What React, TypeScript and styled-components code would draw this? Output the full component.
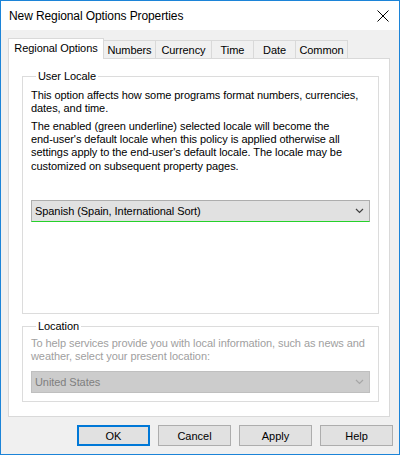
import React from "react";
import styled, { createGlobalStyle } from "styled-components";

const GlobalStyle = createGlobalStyle`
  html, body {
    margin: 0;
    padding: 0;
    background: #ffffff;
  }
  * {
    box-sizing: border-box;
  }
`;

const Window = styled.div`
  width: 400px;
  height: 455px;
  border: 1px solid #1c84d8;
  border-top: none;
  background: #f0f0f0;
  display: flex;
  flex-direction: column;
  font-family: "Liberation Sans", Arial, sans-serif;
  font-size: 11px;
  letter-spacing: -0.07px;
  color: #000;
`;

const TitleBar = styled.div`
  height: 30px;
  background: #ffffff;
  display: flex;
  align-items: center;
  justify-content: space-between;
  padding: 0 10px 0 8px;
  border-top: 1px solid #1c84d8;
`;

const Title = styled.div`
  font-size: 12px;
  line-height: 16px;
  letter-spacing: -0.1px;
`;

const Body = styled.div`
  flex: 1;
  display: flex;
  flex-direction: column;
  padding: 8px 9px 0 7px;
`;

const TabStrip = styled.div`
  display: flex;
  align-items: flex-end;
  height: 20px;
  position: relative;
  z-index: 1;
`;

const Tab = styled.div<{ $active?: boolean; $w: number }>`
  width: ${(p) => p.$w}px;
  height: ${(p) => (p.$active ? 21 : 18)}px;
  margin-bottom: ${(p) => (p.$active ? -1 : 0)}px;
  background: ${(p) => (p.$active ? "#ffffff" : "#f0f0f0")};
  border: 1px solid #d9d9d9;
  border-bottom: none;
  border-left: ${(p) => (p.$active ? "1px solid #d9d9d9" : "none")};
  display: flex;
  align-items: center;
  justify-content: center;
  line-height: 14px;
  padding-bottom: ${(p) => (p.$active ? 2 : 0)}px;
  white-space: nowrap;
`;

const Panel = styled.div`
  height: 359px;
  background: #ffffff;
  border: 1px solid #d9d9d9;
  padding: 17px 10px 0 13px;
  display: flex;
  flex-direction: column;
`;

const GroupBox = styled.div<{ $h: number }>`
  height: ${(p) => p.$h}px;
  border: 1px solid #dcdcdc;
  padding: 0 8px;
  margin-bottom: 12px;
`;

const Legend = styled.div`
  display: table;
  margin: -8px 0 0 5px;
  padding: 0 2px;
  background: #ffffff;
  line-height: 14px;
  color: #000;
`;

const Para = styled.p<{ $disabled?: boolean }>`
  margin: 0;
  line-height: 13.35px;
  color: ${(p) => (p.$disabled ? "#a0a0a0" : "#000")};
`;

const ParaBlock = styled.div<{ $top: number }>`
  margin-top: ${(p) => p.$top}px;
  display: flex;
  flex-direction: column;
  gap: 4px;
`;

const Combo = styled.div<{ $disabled?: boolean; $top: number }>`
  margin-top: ${(p) => p.$top}px;
  height: 22px;
  background: ${(p) => (p.$disabled ? "#cccccc" : "#e1e1e1")};
  border: 1px solid ${(p) => (p.$disabled ? "#bfbfbf" : "#adadad")};
  border-bottom-color: ${(p) => (p.$disabled ? "#bfbfbf" : "#26d12a")};
  color: ${(p) => (p.$disabled ? "#7f7f7f" : "#000")};
  display: flex;
  align-items: center;
  justify-content: space-between;
  padding: 0 5px 0 3px;
  line-height: 14px;
`;

const ButtonRow = styled.div`
  display: flex;
  justify-content: flex-end;
  gap: 8px;
  margin-top: 8px;
  margin-right: -3px;
`;

const Button = styled.button<{ $default?: boolean }>`
  width: 73px;
  height: 21px;
  background: #e1e1e1;
  border: ${(p) => (p.$default ? "2px solid #0078d7" : "1px solid #adadad")};
  font-family: "Liberation Sans", Arial, sans-serif;
  font-size: 11px;
  color: #000;
  padding: 0;
  line-height: 14px;
`;

const Chevron = ({ color }: { color: string }) => (
  <svg width="9" height="6" viewBox="0 0 9 6">
    <path d="M1 1 L4.5 4.5 L8 1" fill="none" stroke={color} strokeWidth="1.2" />
  </svg>
);

const CloseIcon = () => (
  <svg width="12" height="12" viewBox="0 0 12 12">
    <path d="M0.5 0.5 L11.5 11.5 M11.5 0.5 L0.5 11.5" stroke="#000" strokeWidth="1" />
  </svg>
);

const tabs: { label: string; w: number }[] = [
  { label: "Regional Options", w: 96 },
  { label: "Numbers", w: 52 },
  { label: "Currency", w: 56 },
  { label: "Time", w: 42 },
  { label: "Date", w: 42 },
  { label: "Common", w: 52 },
];

// word joiner keeps "end-user's" from breaking at the hyphen, like the Win32 dialog
const endUser = "end-\u2060user's";

export default function App() {
  return (
    <>
      <GlobalStyle />
      <Window>
        <TitleBar>
          <Title>New Regional Options Properties</Title>
          <CloseIcon />
        </TitleBar>
        <Body>
          <TabStrip>
            {tabs.map((t, i) => (
              <Tab key={t.label} $active={i === 0} $w={t.w}>
                {t.label}
              </Tab>
            ))}
          </TabStrip>
          <Panel>
            <GroupBox $h={238}>
              <Legend>User Locale</Legend>
              <ParaBlock $top={6}>
                <Para>
                  This option affects how some programs format numbers, currencies, dates, and time.
                </Para>
                <Para>
                  {`The enabled (green underline) selected locale will become the ${endUser} default locale when this policy is applied otherwise all settings apply to the ${endUser} default locale. The locale may be customized on subsequent property pages.`}
                </Para>
              </ParaBlock>
              <Combo $top={27}>
                <span>Spanish (Spain, International Sort)</span>
                <Chevron color="#404040" />
              </Combo>
            </GroupBox>
            <GroupBox $h={76}>
              <Legend>Location</Legend>
              <ParaBlock $top={4}>
                <Para $disabled>
                  To help services provide you with local information, such as news and weather,
                  select your present location:
                </Para>
              </ParaBlock>
              <Combo $disabled $top={7}>
                <span>United States</span>
                <Chevron color="#a6a6a6" />
              </Combo>
            </GroupBox>
          </Panel>
          <ButtonRow>
            <Button $default>OK</Button>
            <Button>Cancel</Button>
            <Button>Apply</Button>
            <Button>Help</Button>
          </ButtonRow>
        </Body>
      </Window>
    </>
  );
}
